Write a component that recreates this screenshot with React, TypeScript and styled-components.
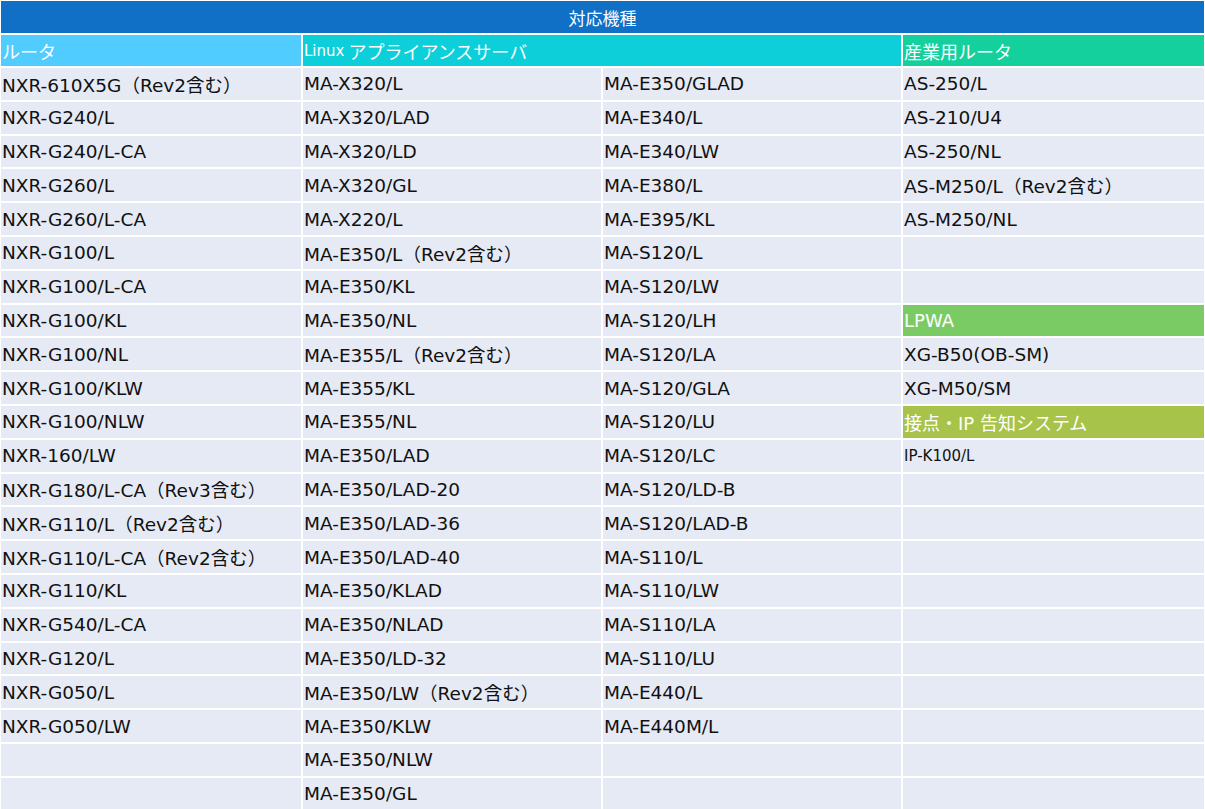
import React from "react";
import styled, { createGlobalStyle } from "styled-components";

const Global = createGlobalStyle`
  html, body { margin: 0; padding: 0; background: #fff; }
  body { font-family: "DejaVu Sans", "Noto Sans CJK JP", sans-serif; }
`;

const Table = styled.div`
  display: grid;
  grid-template-columns: 300px 298px 298px 301px;
  grid-template-rows: 32px 31px;
  grid-auto-rows: 31.8px;
  gap: 2px;
  padding: 1px 0 0 1px;
  width: 1205px;
`;

const Title = styled.div`
  grid-column: 1 / 5;
  background: #0f70c6;
  color: #fff;
  font-size: 17px;
  display: flex;
  align-items: center;
  justify-content: center;
  font-family: "Noto Sans CJK JP", sans-serif;
`;

const Head = styled.div<{ $bg: string; $span?: number }>`
  grid-column: span ${(p) => p.$span ?? 1};
  background: ${(p) => p.$bg};
  color: #fff;
  font-size: 18px;
  display: flex;
  align-items: center;
  padding-left: 1px;
  white-space: nowrap;
  overflow: hidden;
`;

const Small = styled.span`
  font-size: 15px;
  margin-right: 4px;
`;

const Cell = styled.div<{ $small?: boolean }>`
  background: #e6eaf5;
  color: #111;
  font-size: ${(p) => (p.$small ? "15px" : "18.5px")};
  display: flex;
  align-items: center;
  padding-left: 1px;
  white-space: nowrap;
  overflow: hidden;
`;

const c1 = ["NXR-610X5G（Rev2含む）","NXR-G240/L","NXR-G240/L-CA","NXR-G260/L","NXR-G260/L-CA","NXR-G100/L","NXR-G100/L-CA","NXR-G100/KL","NXR-G100/NL","NXR-G100/KLW","NXR-G100/NLW","NXR-160/LW","NXR-G180/L-CA（Rev3含む）","NXR-G110/L（Rev2含む）","NXR-G110/L-CA（Rev2含む）","NXR-G110/KL","NXR-G540/L-CA","NXR-G120/L","NXR-G050/L","NXR-G050/LW","",""];
const c2 = ["MA-X320/L","MA-X320/LAD","MA-X320/LD","MA-X320/GL","MA-X220/L","MA-E350/L（Rev2含む）","MA-E350/KL","MA-E350/NL","MA-E355/L（Rev2含む）","MA-E355/KL","MA-E355/NL","MA-E350/LAD","MA-E350/LAD-20","MA-E350/LAD-36","MA-E350/LAD-40","MA-E350/KLAD","MA-E350/NLAD","MA-E350/LD-32","MA-E350/LW（Rev2含む）","MA-E350/KLW","MA-E350/NLW","MA-E350/GL"];
const c3 = ["MA-E350/GLAD","MA-E340/L","MA-E340/LW","MA-E380/L","MA-E395/KL","MA-S120/L","MA-S120/LW","MA-S120/LH","MA-S120/LA","MA-S120/GLA","MA-S120/LU","MA-S120/LC","MA-S120/LD-B","MA-S120/LAD-B","MA-S110/L","MA-S110/LW","MA-S110/LA","MA-S110/LU","MA-E440/L","MA-E440M/L","",""];
type C4 = { t: string; bg?: string; small?: boolean };
const c4: C4[] = [
  { t: "AS-250/L" }, { t: "AS-210/U4" }, { t: "AS-250/NL" }, { t: "AS-M250/L（Rev2含む）" }, { t: "AS-M250/NL" },
  { t: "" }, { t: "" }, { t: "LPWA", bg: "#7bcb64" }, { t: "XG-B50(OB-SM)" }, { t: "XG-M50/SM" },
  { t: "接点・IP 告知システム", bg: "#a8c34a" }, { t: "IP-K100/L", small: true },
];
while (c4.length < 22) c4.push({ t: "" });

export default function App() {
  return (
    <>
      <Global />
      <Table>
        <Title>対応機種</Title>
        <Head $bg="#50cdfe">ルータ</Head>
        <Head $bg="#0ccfda" $span={2}><Small>Linux</Small>アプライアンスサーバ</Head>
        <Head $bg="#14d09c">産業用ルータ</Head>
        {c1.map((_, i) => (
          <React.Fragment key={i}>
            <Cell>{c1[i]}</Cell>
            <Cell>{c2[i]}</Cell>
            <Cell>{c3[i]}</Cell>
            {c4[i].bg ? (
              <Head $bg={c4[i].bg!}>{c4[i].t}</Head>
            ) : (
              <Cell $small={c4[i].small}>{c4[i].t}</Cell>
            )}
          </React.Fragment>
        ))}
      </Table>
    </>
  );
}
